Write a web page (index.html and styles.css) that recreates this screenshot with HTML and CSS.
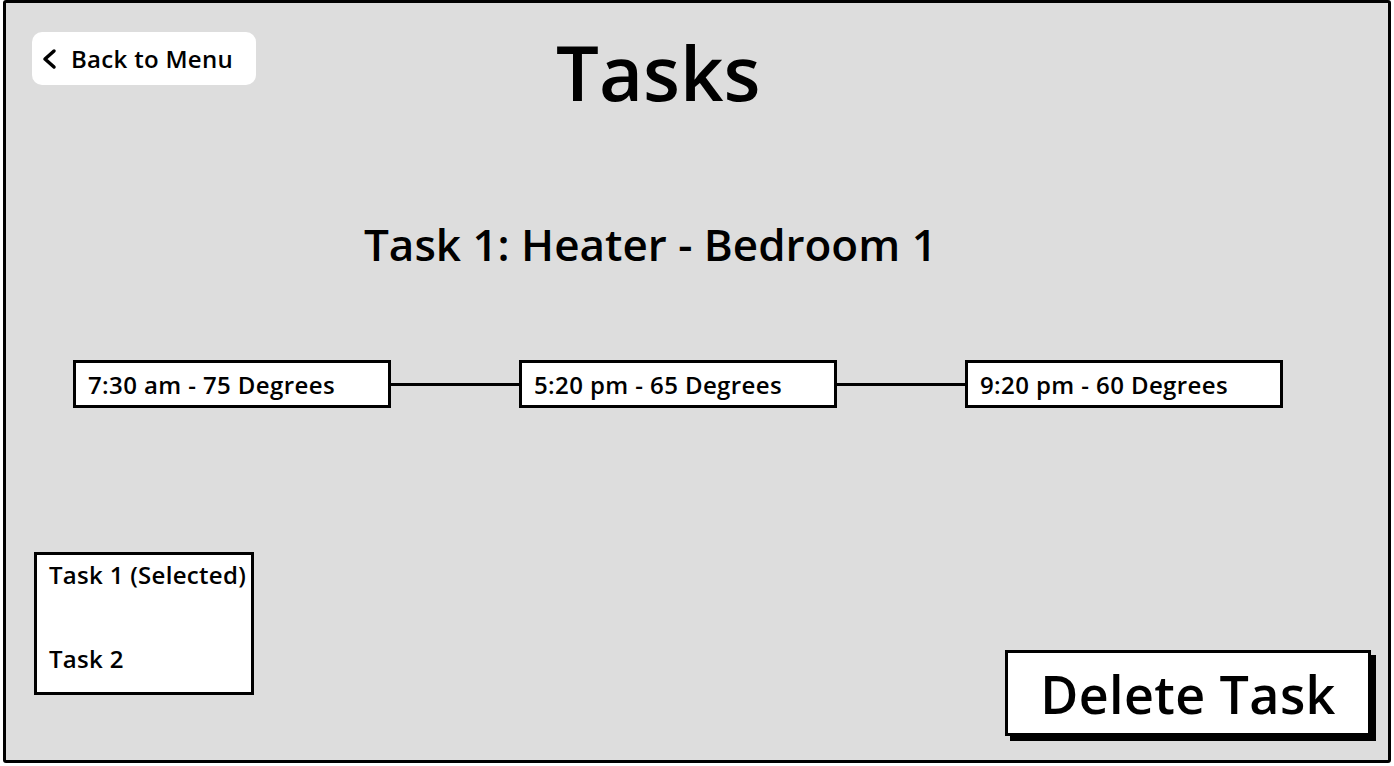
FILE: index.html
```html
<!DOCTYPE html>
<html lang="en">
<head>
    <meta charset="UTF-8">
    <meta name="viewport" content="width=device-width, initial-scale=1.0">
    <title>Tasks</title>
    <link rel="stylesheet" href="styles.css">
</head>
<body>

    <div class="frame">
        <div class="top-row">
            <button class="back-btn" type="button">
                <svg class="chevron" width="18" height="24" viewBox="0 0 18 24">
                    <path d="M14 4 L5 12 L14 20" fill="none" stroke="#000" stroke-width="3.5" stroke-linecap="round" stroke-linejoin="round"/>
                </svg>
                Back to Menu
            </button>
            <h1 class="page-title">Tasks</h1>
        </div>

        <h2 class="task-title">Task 1: Heater - Bedroom 1</h2>

        <div class="timeline">
            <div class="step">7:30 am - 75 Degrees</div>
            <div class="connector"></div>
            <div class="step">5:20 pm - 65 Degrees</div>
            <div class="connector"></div>
            <div class="step">9:20 pm - 60 Degrees</div>
        </div>

        <div class="bottom-row">
            <ul class="task-list">
                <li>Task 1 (Selected)</li>
                <li>Task 2</li>
            </ul>
            <button class="delete-btn" type="button">Delete Task</button>
        </div>
    </div>

</body>
</html>
```

FILE: styles.css
```css
html, body {
    height: 100%;
}

body {
    font-family: 'Open Sans', sans-serif;
    font-weight: 600;
    color: #000;
    background-color: #fff;
    margin: 0;
    padding: 0 3px 3px 3px;
    box-sizing: border-box;
}

.frame {
    height: 100%;
    box-sizing: border-box;
    border: 3px solid #000;
    border-radius: 3px;
    background-color: #dddddd;
    padding: 29px 17px 19px 26px;
    display: flex;
    flex-direction: column;
}

.top-row {
    display: flex;
    align-items: flex-start;
}

.back-btn {
    display: flex;
    align-items: center;
    gap: 13px;
    width: 224px;
    height: 53px;
    padding: 0 0 0 8px;
    background-color: #fff;
    border: none;
    border-radius: 10px;
    font-family: inherit;
    font-weight: 600;
    font-size: 24px;
    letter-spacing: 0.3px;
    color: #000;
}

.page-title {
    margin: 2px 0 0 300px;
    font-size: 76px;
    font-weight: 600;
    line-height: 1;
}

.task-title {
    margin: 112px 0 0 332px;
    font-size: 44px;
    font-weight: 600;
    line-height: 1;
}

.timeline {
    display: flex;
    align-items: center;
    margin: 94px 0 0 41px;
}

.step {
    width: 318px;
    height: 48px;
    box-sizing: border-box;
    border: 3px solid #000;
    background-color: #fff;
    display: flex;
    align-items: center;
    padding-left: 12px;
    font-size: 24px;
    letter-spacing: 0.4px;
}

.connector {
    width: 128px;
    height: 3px;
    background-color: #000;
}

.bottom-row {
    margin-top: auto;
    display: flex;
    justify-content: space-between;
    align-items: flex-end;
}

.task-list {
    list-style: none;
    margin: 0 0 46px 2px;
    padding: 4px 0 0 12px;
    width: 220px;
    height: 143px;
    box-sizing: border-box;
    border: 3px solid #000;
    background-color: #fff;
    font-size: 24px;
    letter-spacing: 0.3px;
    white-space: nowrap;
}

.task-list li {
    line-height: 32px;
}

.task-list li + li {
    margin-top: 52px;
}

.delete-btn {
    width: 366px;
    height: 86px;
    box-sizing: border-box;
    border: 3px solid #000;
    background-color: #fff;
    box-shadow: 5px 5px 0 #000;
    font-family: inherit;
    font-weight: 600;
    font-size: 52px;
    letter-spacing: 0.4px;
    color: #000;
    margin-bottom: 5px;
}
```
